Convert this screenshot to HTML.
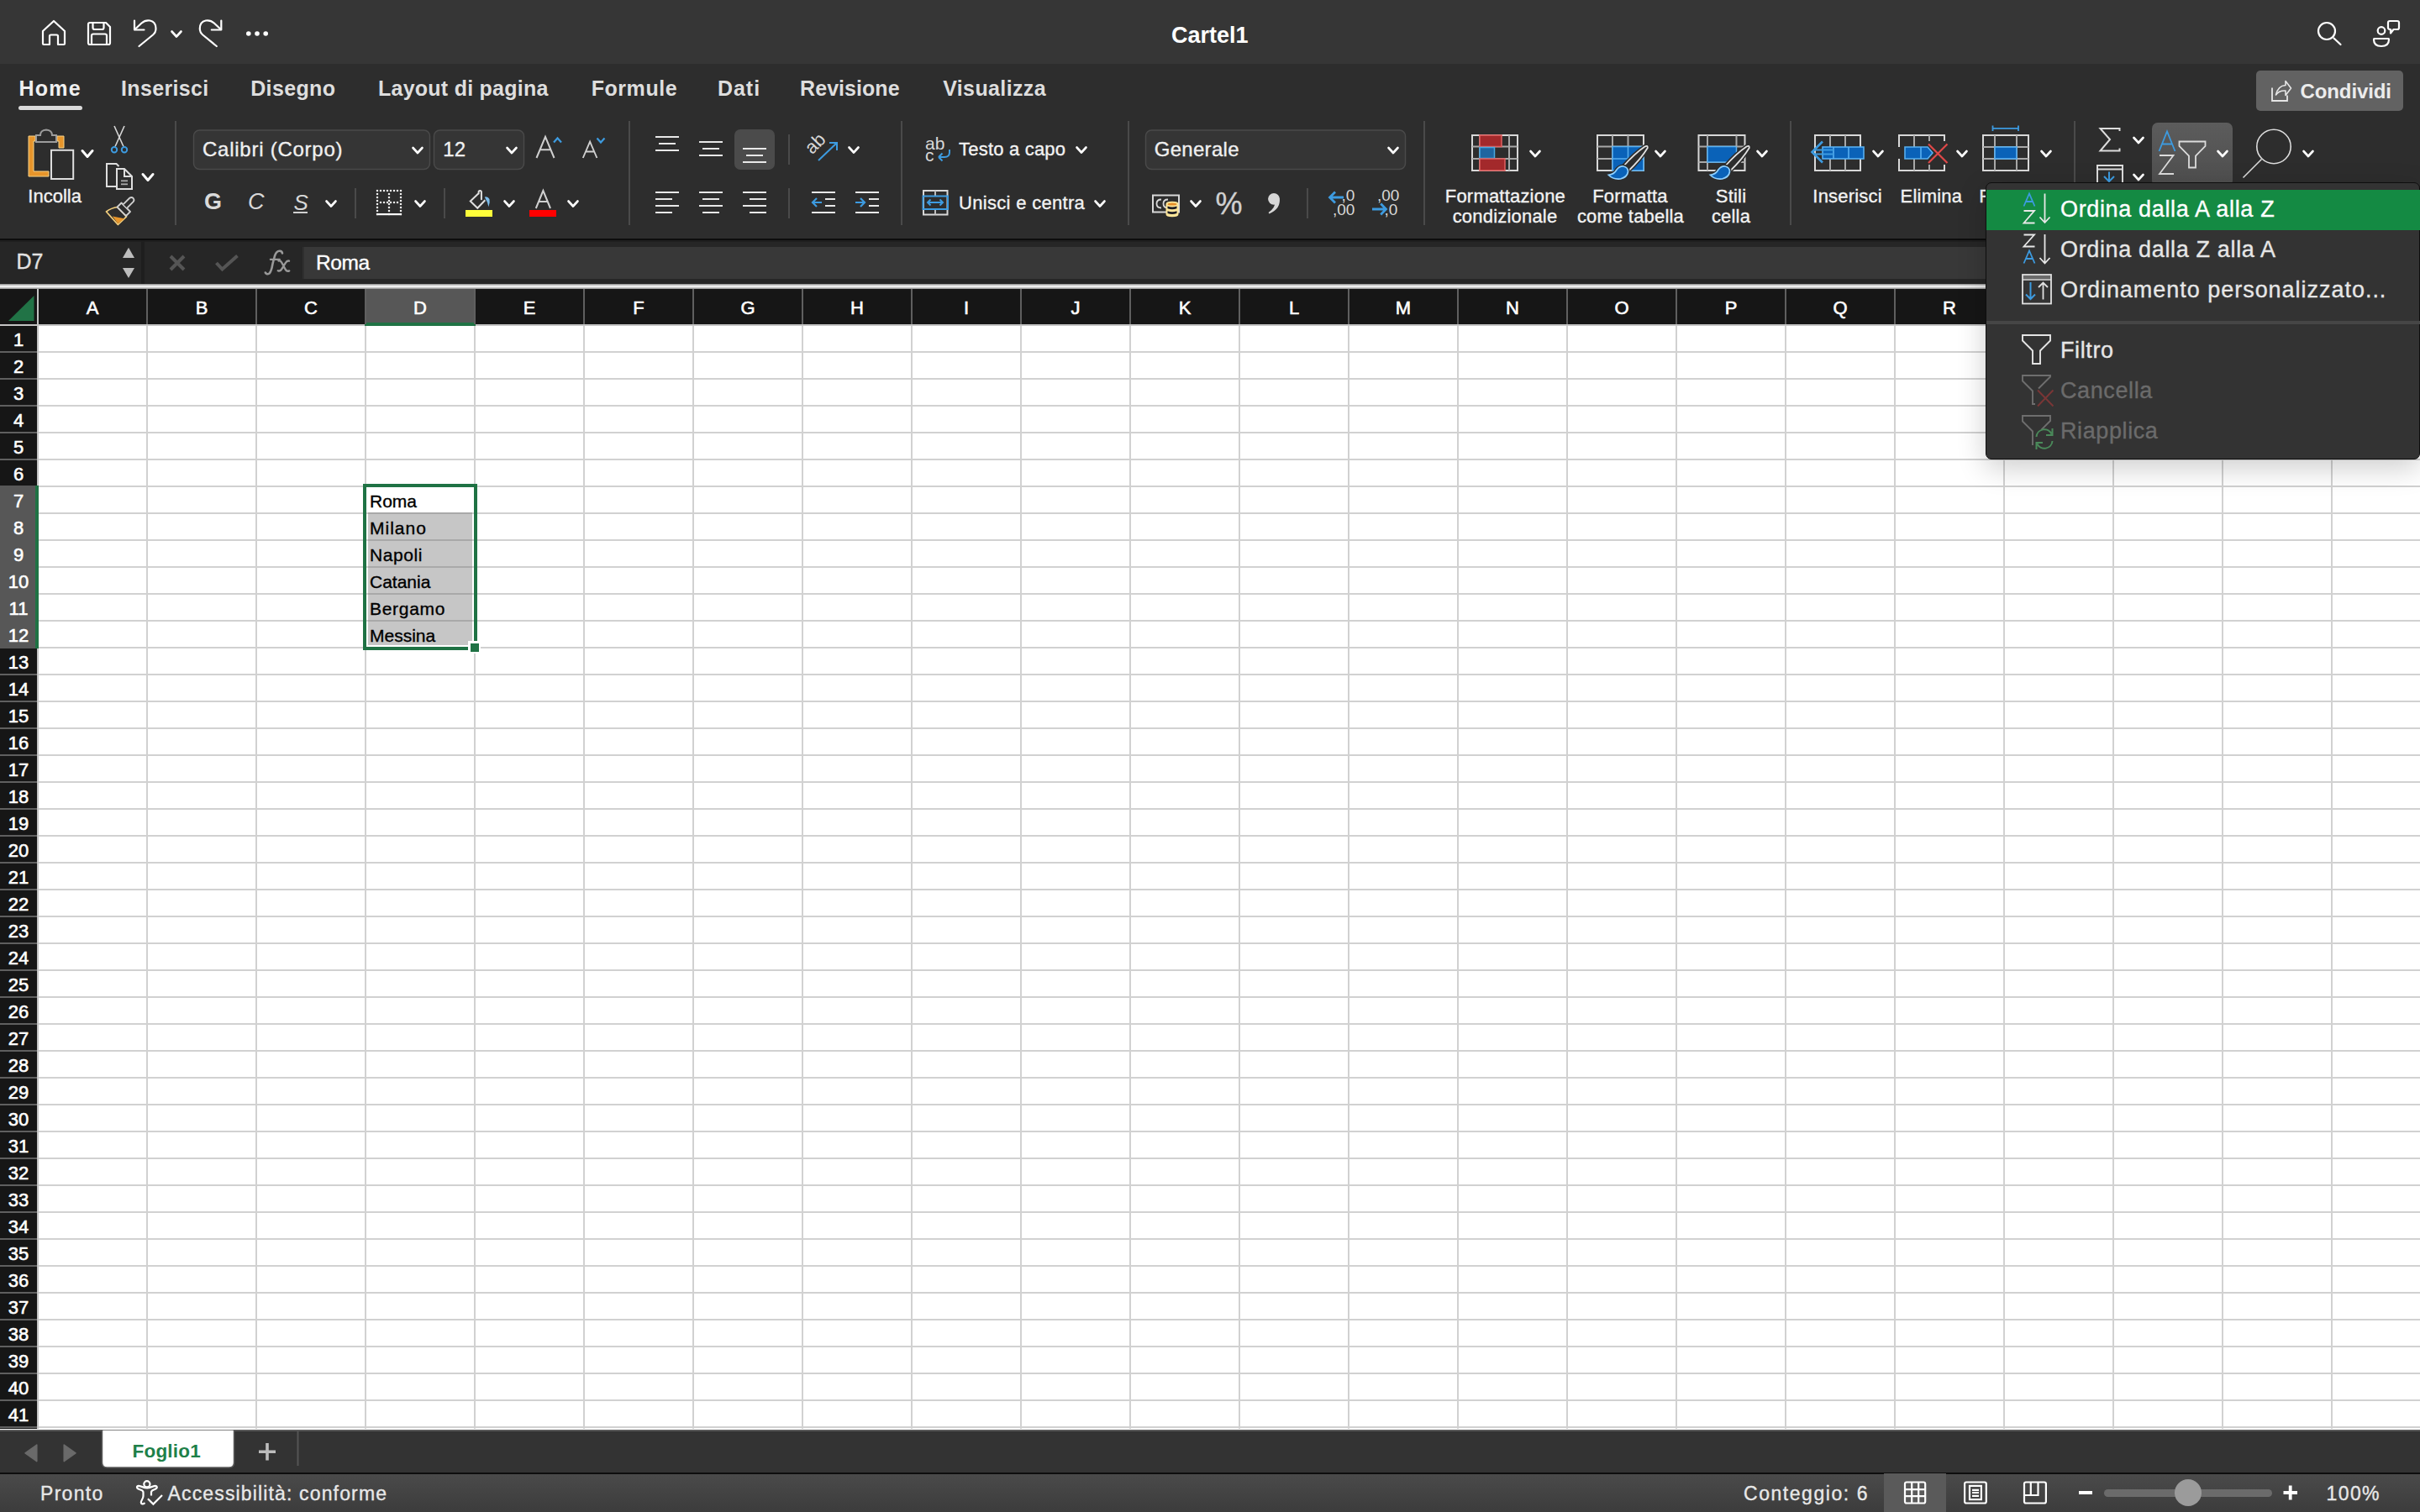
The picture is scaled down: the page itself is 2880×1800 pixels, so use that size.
<!DOCTYPE html>
<html><head><meta charset="utf-8">
<style>
*{margin:0;padding:0;box-sizing:border-box}
html,body{width:2880px;height:1800px;overflow:hidden;background:#fff;font-family:"Liberation Sans",sans-serif}
.a{position:absolute}
#title{left:0;top:0;width:2880px;height:76px;background:#363636}
#ribbon{left:0;top:76px;width:2880px;height:208px;background:#2d2d2d}
#rline{left:0;top:284px;width:2880px;height:2px;background:#0d0d0d}
#fbar{left:0;top:286px;width:2880px;height:52px;background:#262626}
#hline{left:0;top:338px;width:2880px;height:6px;background:linear-gradient(#8a8a8a,#f6f6f6 45%,#f6f6f6 55%,#8a8a8a)}
#colhdr{left:0;top:344px;width:2880px;height:42px;background:#161616}
#hdrb{left:0;top:386px;width:2880px;height:2px;background:#c4c4c4}
#grid{left:46px;top:388px;width:2834px;height:1313px;background-color:#fff;
 background-image:linear-gradient(to right, transparent 128px, #d1d1d1 128px, #d1d1d1 130px),linear-gradient(to bottom, transparent 30px, #d1d1d1 30px, #d1d1d1 32px);
 background-size:130px 32px,130px 32px}
#rowhdr{left:0;top:388px;width:44px;height:1313px;background:#161616;
 background-image:linear-gradient(to bottom, transparent 30px, #5f5f5f 30px, #5f5f5f 32px);background-size:44px 32px}
#rowhdrb{left:44px;top:344px;width:2px;height:1357px;background:#c4c4c4}
.ch{position:absolute;top:344px;width:128px;height:42px;line-height:45px;text-align:center;color:#fff;font-size:22px;-webkit-text-stroke:0.6px #fff}
.ch::after{content:"";position:absolute;right:-2px;top:0;width:2px;height:42px;background:#5f5f5f}
.rh{position:absolute;left:0;width:44px;height:30px;line-height:33px;text-align:center;color:#fff;font-size:22px;-webkit-text-stroke:0.6px #fff}
#tabbar{left:0;top:1702px;width:2880px;height:52px;background:#333}
#sline{left:0;top:1753px;width:2880px;height:2px;background:#0e0e0e}
#status{left:0;top:1755px;width:2880px;height:45px;background:linear-gradient(#4a4a4a,#3c3c3c)}
.t{position:absolute;white-space:nowrap;color:#e6e6e6;-webkit-text-stroke:0.35px currentColor}
.nb{-webkit-text-stroke:0}
</style></head><body>
<div class="a" id="title"></div>
<svg class="a" style="left:0;top:0" width="2880" height="76" fill="none" stroke="#fff" stroke-width="2.2" stroke-linejoin="round" stroke-linecap="round">
<path d="M51,52 L51,37 L64,25 L77,37 L77,52 Q77,53 76,53 L69,53 L69,43 Q69,41.5 67.5,41.5 L60.5,41.5 Q59,41.5 59,43 L59,53 L52,53 Q51,53 51,52 Z"/>
<path d="M105,29 Q105,27 107,27 L126,27 L131,32 L131,51 Q131,53 129,53 L107,53 Q105,53 105,51 Z"/>
<path d="M110.5,27 L110.5,33 Q110.5,35 112.5,35 L121.5,35 Q123.5,35 123.5,33 L123.5,27"/>
<path d="M109,53 L109,42.5 Q109,40.5 111,40.5 L125,40.5 Q127,40.5 127,42.5 L127,53"/>
<path d="M160,24.5 L160,35.5 L171.5,35.5"/>
<path d="M160.5,35 L168.5,27.5 Q173,23.5 178.5,24.5 Q185.5,26 185.5,34 Q185.5,38.5 182,41.5 L165.5,55"/>
<path d="M204.5,37.5 L210,43.5 L215.5,37.5" stroke-width="2.6"/>
<path d="M263.3,24.5 L263.3,35.5 L251.8,35.5"/>
<path d="M262.8,35 L254.8,27.5 Q250.3,23.5 244.8,24.5 Q237.8,26 237.8,34 Q237.8,38.5 241.3,41.5 L257.8,55"/>
<circle cx="2769" cy="37" r="10"/>
<path d="M2777.5,45.5 L2785.5,53"/>
<circle cx="2834" cy="36.5" r="4.3"/>
<path d="M2825.5,46 L2842.5,46 Q2843,46 2843,47 Q2843,55 2834,55 Q2825,55 2825,47 Q2825,46 2825.5,46 Z"/>
<path d="M2844,25 L2853,25 Q2855,25 2855,27 L2855,33 Q2855,35 2853,35 L2848.5,35 L2845,39.5 L2845,35 Q2842,35 2842,33 L2842,27 Q2842,25 2844,25 Z"/>
</svg>
<svg class="a" style="left:0;top:0" width="400" height="76" fill="#fff"><circle cx="295.8" cy="40" r="2.8"/><circle cx="306" cy="40" r="2.8"/><circle cx="316.2" cy="40" r="2.8"/></svg>
<div class="t nb" style="left:1394px;top:27px;font-size:27px;font-weight:bold;color:#fff;line-height:30px">Cartel1</div>

<div class="a" id="ribbon"></div>
<!--RIBBON-->
<svg class="a" style="left:0;top:0" width="2880" height="290"><defs><linearGradient id="sfg" x1="0" y1="0" x2="0" y2="1"><stop offset="0" stop-color="#5c5c5c"/><stop offset="1" stop-color="#4e4e4e"/></linearGradient></defs><path d="M34,162 L42,162 L42,168 L40,168 L40,204 L58,204 L58,210 L34,210 Z" fill="#e6952b" stroke="#f6d38a" stroke-width="1"/><path d="M68,162 L76,162 L76,176 L70,176 L70,168 L68,168 Z" fill="#e6952b" stroke="#f6d38a" stroke-width="1"/><path d="M43,169 L43,161 L48,161 Q48,155 55,154.5 Q62,155 62,161 L67,161 L67,169 Z" fill="none" stroke="#9c9c9c" stroke-width="2"/><rect x="61" y="178.8" width="26.2" height="34.2" fill="#2d2d2d" stroke="#dedede" stroke-width="2"/><path d="M98.0,179.5 L104,186.5 L110.0,179.5" stroke="#fff" stroke-width="3" fill="none" stroke-linecap="round" stroke-linejoin="round"/><path d="M136,150 L147,174.5" stroke="#d8d8d8" stroke-width="1.6" fill="none"/><path d="M148,150 L137,174.5" stroke="#d8d8d8" stroke-width="1.6" fill="none"/><circle cx="136" cy="178.3" r="3.2" fill="none" stroke="#3d9be0" stroke-width="2"/><circle cx="148" cy="178.3" r="3.2" fill="none" stroke="#3d9be0" stroke-width="2"/><path d="M139,222 L127,222 L127,195 L138.5,195 L141.5,198" fill="none" stroke="#dedede" stroke-width="2"/><path d="M139,201 L148,201 L157,210 L157,225 L139,225 Z" fill="none" stroke="#dedede" stroke-width="2"/><path d="M148,201 L148,210 L157,210" fill="none" stroke="#dedede" stroke-width="2"/><path d="M144,215.3 L152,215.3" stroke="#aaa" stroke-width="1.8" fill="none"/><path d="M144,219.3 L152,219.3" stroke="#aaa" stroke-width="1.8" fill="none"/><path d="M170.0,207.5 L176,214.5 L182.0,207.5" stroke="#fff" stroke-width="3" fill="none" stroke-linecap="round" stroke-linejoin="round"/><path d="M126.5,252 Q132.5,247.5 139.5,246.5 L150.5,257.8 L140.4,267.5 Z" fill="#2d2d2d" stroke="#f3cf7e" stroke-width="1.7" stroke-linejoin="round"/><path d="M133.8,257.5 L148.2,260.2 L140.4,266.2 Z" fill="#e6952b"/><path d="M139.5,246.5 L144.5,241.5 L155,252 L150,257 Z" fill="#2d2d2d" stroke="#d0d0d0" stroke-width="1.8" stroke-linejoin="round"/><path d="M146.8,243.2 L154.2,235.8 Q156.6,234 158.6,236 Q160.4,238.2 158.6,240.2 L151.2,247.6" fill="#2d2d2d" stroke="#d0d0d0" stroke-width="1.8"/><rect x="208" y="144" width="2" height="124" fill="#4a4a4a"/><rect x="230.5" y="155" width="281" height="46.5" rx="7" fill="#353535" stroke="#4a4a4a" stroke-width="1.5"/><rect x="516.5" y="155" width="107" height="46.5" rx="7" fill="#353535" stroke="#4a4a4a" stroke-width="1.5"/><path d="M491.5,176.0 L497,182.0 L502.5,176.0" stroke="#fff" stroke-width="2.6" fill="none" stroke-linecap="round" stroke-linejoin="round"/><path d="M603.5,176.0 L609,182.0 L614.5,176.0" stroke="#fff" stroke-width="2.6" fill="none" stroke-linecap="round" stroke-linejoin="round"/><path d="M659,169.5 L663.5,164.5 L668,169.5" stroke="#3d9be0" stroke-width="2.2" fill="none"/><path d="M710.5,164.5 L715,169.5 L719.5,164.5" stroke="#3d9be0" stroke-width="2.2" fill="none"/><path d="M388.5,239.5 L394,245.5 L399.5,239.5" stroke="#fff" stroke-width="2.6" fill="none" stroke-linecap="round" stroke-linejoin="round"/><rect x="422" y="224" width="2" height="36" fill="#4a4a4a"/><g fill="#f0f0f0"><rect x="447.9" y="225.9" width="2.2" height="2.2"/><rect x="451.9" y="225.9" width="2.2" height="2.2"/><rect x="455.9" y="225.9" width="2.2" height="2.2"/><rect x="459.9" y="225.9" width="2.2" height="2.2"/><rect x="463.9" y="225.9" width="2.2" height="2.2"/><rect x="467.9" y="225.9" width="2.2" height="2.2"/><rect x="471.9" y="225.9" width="2.2" height="2.2"/><rect x="475.9" y="225.9" width="2.2" height="2.2"/><rect x="447.9" y="229.9" width="2.2" height="2.2"/><rect x="475.9" y="229.9" width="2.2" height="2.2"/><rect x="461.9" y="229.9" width="2.2" height="2.2"/><rect x="447.9" y="233.9" width="2.2" height="2.2"/><rect x="475.9" y="233.9" width="2.2" height="2.2"/><rect x="461.9" y="233.9" width="2.2" height="2.2"/><rect x="447.9" y="237.9" width="2.2" height="2.2"/><rect x="475.9" y="237.9" width="2.2" height="2.2"/><rect x="461.9" y="237.9" width="2.2" height="2.2"/><rect x="447.9" y="241.9" width="2.2" height="2.2"/><rect x="475.9" y="241.9" width="2.2" height="2.2"/><rect x="461.9" y="241.9" width="2.2" height="2.2"/><rect x="447.9" y="245.9" width="2.2" height="2.2"/><rect x="475.9" y="245.9" width="2.2" height="2.2"/><rect x="461.9" y="245.9" width="2.2" height="2.2"/><rect x="447.9" y="249.9" width="2.2" height="2.2"/><rect x="475.9" y="249.9" width="2.2" height="2.2"/><rect x="461.9" y="249.9" width="2.2" height="2.2"/><rect x="447.9" y="253.9" width="2.2" height="2.2"/><rect x="475.9" y="253.9" width="2.2" height="2.2"/><rect x="461.9" y="253.9" width="2.2" height="2.2"/><rect x="451.9" y="239.9" width="2.2" height="2.2"/><rect x="455.9" y="239.9" width="2.2" height="2.2"/><rect x="459.9" y="239.9" width="2.2" height="2.2"/><rect x="463.9" y="239.9" width="2.2" height="2.2"/><rect x="467.9" y="239.9" width="2.2" height="2.2"/><rect x="471.9" y="239.9" width="2.2" height="2.2"/></g><rect x="448" y="254" width="30" height="2.2" fill="#fff"/><path d="M494.5,239.5 L500,245.5 L505.5,239.5" stroke="#fff" stroke-width="2.6" fill="none" stroke-linecap="round" stroke-linejoin="round"/><rect x="528" y="224" width="2" height="36" fill="#4a4a4a"/><path d="M569.2,230.6 L559.8,239.5 L568.3,247.8 L577.3,238.2" fill="none" stroke="#e0e0e0" stroke-width="2" stroke-linejoin="miter"/><path d="M569.6,230.5 L569.6,228.8 Q569.6,227 571.2,227 Q572.9,227 572.9,228.8 L572.9,237.3" fill="none" stroke="#e0e0e0" stroke-width="2" stroke-linecap="round"/><path d="M576.8,234.6 Q580.5,233.5 582.5,237 Q583.5,241 581.4,246.3 Q580.5,240.5 578.2,237.5 Z" fill="#7cbdec"/><path d="M638.5,188 L649,162.8 L659.5,188 M642.6,178.2 L655.4,178.2" fill="none" stroke="#d0d0d0" stroke-width="2"/><path d="M693.8,188 L702.1,168.6 L710.4,188 M697,180.5 L707.2,180.5" fill="none" stroke="#d0d0d0" stroke-width="1.9"/><path d="M637.8,248 L646.4,227 L655,248 M641.2,240 L651.6,240" fill="none" stroke="#d0d0d0" stroke-width="2"/><rect x="554" y="250" width="32" height="8" fill="#fdfd3a"/><path d="M600.5,239.5 L606,245.5 L611.5,239.5" stroke="#fff" stroke-width="2.6" fill="none" stroke-linecap="round" stroke-linejoin="round"/><rect x="630" y="250" width="32" height="8" fill="#f00"/><path d="M676.5,239.5 L682,245.5 L687.5,239.5" stroke="#fff" stroke-width="2.6" fill="none" stroke-linecap="round" stroke-linejoin="round"/><rect x="748" y="144" width="2" height="124" fill="#4a4a4a"/><rect x="780" y="162" width="28" height="2" fill="#e8e8e8"/><rect x="784" y="170" width="20" height="2" fill="#e8e8e8"/><rect x="780" y="178" width="28" height="2" fill="#e8e8e8"/><rect x="832" y="168" width="28" height="2" fill="#e8e8e8"/><rect x="836" y="176" width="20" height="2" fill="#e8e8e8"/><rect x="832" y="184" width="28" height="2" fill="#e8e8e8"/><rect x="874" y="154" width="48" height="48" rx="7" fill="#4b4b4b"/><rect x="884" y="176" width="28" height="2" fill="#e8e8e8"/><rect x="888" y="184" width="20" height="2" fill="#e8e8e8"/><rect x="884" y="192" width="28" height="2" fill="#e8e8e8"/><rect x="938" y="160" width="2" height="36" fill="#4a4a4a"/><path d="M974,191 L996,170" stroke="#3d9be0" stroke-width="2" fill="none"/><path d="M987,170 L996,170 L996,179" stroke="#3d9be0" stroke-width="2" fill="none"/><path d="M1010.5,175.5 L1016,181.5 L1021.5,175.5" stroke="#fff" stroke-width="2.6" fill="none" stroke-linecap="round" stroke-linejoin="round"/><rect x="780" y="228" width="28" height="2" fill="#e8e8e8"/><rect x="780" y="236" width="20" height="2" fill="#e8e8e8"/><rect x="780" y="244" width="28" height="2" fill="#e8e8e8"/><rect x="780" y="252" width="20" height="2" fill="#e8e8e8"/><rect x="832" y="228" width="28" height="2" fill="#e8e8e8"/><rect x="836" y="236" width="20" height="2" fill="#e8e8e8"/><rect x="832" y="244" width="28" height="2" fill="#e8e8e8"/><rect x="836" y="252" width="20" height="2" fill="#e8e8e8"/><rect x="884" y="228" width="28" height="2" fill="#e8e8e8"/><rect x="892" y="236" width="20" height="2" fill="#e8e8e8"/><rect x="884" y="244" width="28" height="2" fill="#e8e8e8"/><rect x="892" y="252" width="20" height="2" fill="#e8e8e8"/><rect x="938" y="224" width="2" height="36" fill="#4a4a4a"/><rect x="966" y="228" width="28" height="2" fill="#e8e8e8"/><rect x="982" y="236" width="12" height="2" fill="#e8e8e8"/><rect x="982" y="244" width="12" height="2" fill="#e8e8e8"/><rect x="966" y="252" width="28" height="2" fill="#e8e8e8"/><path d="M978,241 L967,241 M972,236 L967,241 L972,246" stroke="#3d9be0" stroke-width="2.2" fill="none"/><rect x="1018" y="228" width="28" height="2" fill="#e8e8e8"/><rect x="1034" y="236" width="12" height="2" fill="#e8e8e8"/><rect x="1034" y="244" width="12" height="2" fill="#e8e8e8"/><rect x="1018" y="252" width="28" height="2" fill="#e8e8e8"/><path d="M1018,241 L1029,241 M1024,236 L1029,241 L1024,246" stroke="#3d9be0" stroke-width="2.2" fill="none"/><rect x="1072" y="144" width="2" height="124" fill="#4a4a4a"/><path d="M1117,187 L1121.5,182.5 M1117,187 L1121.5,191.5 M1117,187 L1124,187 Q1130,187 1130,181.5 L1130,178" stroke="#3d9be0" stroke-width="2" fill="none"/><path d="M1281.5,175.5 L1287,181.5 L1292.5,175.5" stroke="#fff" stroke-width="2.6" fill="none" stroke-linecap="round" stroke-linejoin="round"/><rect x="1099" y="227" width="28.5" height="28.5" fill="none" stroke="#d8d8d8" stroke-width="2"/><path d="M1113,227 L1113,233 M1113,249 L1113,255.5" stroke="#bcbcbc" stroke-width="2"/><rect x="1098.5" y="233.5" width="29.5" height="15.5" fill="none" stroke="#3d9be0" stroke-width="2"/><path d="M1104,241 L1122,241 M1107.5,237.5 L1104,241 L1107.5,244.5 M1118.5,237.5 L1122,241 L1118.5,244.5" stroke="#3d9be0" stroke-width="2" fill="none"/><path d="M1303.5,239.5 L1309,245.5 L1314.5,239.5" stroke="#fff" stroke-width="2.6" fill="none" stroke-linecap="round" stroke-linejoin="round"/><rect x="1342" y="144" width="2" height="124" fill="#4a4a4a"/><rect x="1363.5" y="155" width="309" height="46.5" rx="7" fill="#353535" stroke="#4a4a4a" stroke-width="1.5"/><path d="M1652.5,176.0 L1658,182.0 L1663.5,176.0" stroke="#fff" stroke-width="2.6" fill="none" stroke-linecap="round" stroke-linejoin="round"/><rect x="1372" y="232.5" width="31" height="20" fill="none" stroke="#d8d8d8" stroke-width="2"/><path d="M1382,237.5 Q1376.5,237.5 1376.5,242.5 Q1376.5,247.5 1382,247.5 M1390,237.5 Q1384.5,237.5 1384.5,242.5 Q1384.5,247.5 1390,247.5" stroke="#d8d8d8" stroke-width="1.8" fill="none"/><path d="M1387.5,243 Q1387.5,239.8 1395,239.8 Q1402.5,239.8 1402.5,243 L1402.5,255 Q1402.5,258.2 1395,258.2 Q1387.5,258.2 1387.5,255 Z" fill="#fde69a"/><ellipse cx="1395" cy="243" rx="5.5" ry="1.6" fill="#e58e2a"/><path d="M1389.5,245.6 Q1395,247.6 1400.5,245.6 L1400.5,248.2 Q1395,250.4 1389.5,248.2 Z M1389.5,251.2 Q1395,253.2 1400.5,251.2 L1400.5,254 Q1395,256.2 1389.5,254 Z" fill="#1c1c24"/><path d="M1417.5,239.5 L1423,245.5 L1428.5,239.5" stroke="#fff" stroke-width="2.6" fill="none" stroke-linecap="round" stroke-linejoin="round"/><rect x="1555" y="224" width="2" height="36" fill="#4a4a4a"/><path d="M1599,235 L1582.5,235 M1589,228.6 L1582.5,235 L1589,241.4" stroke="#3d9be0" stroke-width="2.8" fill="none"/><path d="M1633,249 L1649.5,249 M1643.2,242.6 L1649.5,249 L1643.2,255.4" stroke="#3d9be0" stroke-width="2.8" fill="none"/><circle cx="1516" cy="236.8" r="6.9" fill="#d6d6d6"/><path d="M1522.5,235.5 Q1525,248 1510.5,254.5 L1509.6,253 Q1518,247 1517,241 Z" fill="#d6d6d6"/><rect x="1694" y="144" width="2" height="124" fill="#4a4a4a"/><rect x="1752" y="161" width="54" height="42" fill="none" stroke="#d8d8d8" stroke-width="2"/><path d="M1761,161 L1761,203" stroke="#a8a8a8" stroke-width="2"/><path d="M1796,161 L1796,203" stroke="#a8a8a8" stroke-width="2"/><path d="M1752,174.5 L1806,174.5" stroke="#a8a8a8" stroke-width="2"/><path d="M1752,189 L1806,189" stroke="#a8a8a8" stroke-width="2"/><rect x="1761" y="161" width="26" height="13.5" fill="#a3292b" stroke="#e06060" stroke-width="1.5"/><rect x="1761" y="175.5" width="17.5" height="13" fill="#1f65a0" stroke="#4aa8e0" stroke-width="1.5"/><rect x="1761" y="189" width="30" height="14" fill="#a3292b" stroke="#e06060" stroke-width="1.5"/><path d="M1821.5,180.0 L1827,186.0 L1832.5,180.0" stroke="#fff" stroke-width="2.6" fill="none" stroke-linecap="round" stroke-linejoin="round"/><rect x="1901" y="161" width="55" height="42" fill="none" stroke="#d8d8d8" stroke-width="2"/><path d="M1919,161 L1919,203" stroke="#a8a8a8" stroke-width="2"/><path d="M1937.5,161 L1937.5,203" stroke="#a8a8a8" stroke-width="2"/><path d="M1901,174.5 L1956,174.5" stroke="#a8a8a8" stroke-width="2"/><path d="M1901,189 L1956,189" stroke="#a8a8a8" stroke-width="2"/><rect x="1919" y="174.5" width="37" height="28.5" fill="#0a62b8" stroke="#58b0f0" stroke-width="1.5"/><path d="M1937.5,174.5 L1937.5,203 M1919,189 L1956,189" stroke="#58b0f0" stroke-width="1.5"/><path d="M1932.0,198 Q1945.0,183 1957.5,174.5 Q1961.0,172.5 1960.8,176 Q1953.0,189 1938.0,203.5 Z" fill="#2d2d2d" stroke="#2d2d2d" stroke-width="5"/><path d="M1932.0,198 Q1945.0,183 1957.5,174.5 Q1961.0,172.5 1960.8,176 Q1953.0,189 1938.0,203.5 Z" fill="#2d2d2d" stroke="#e0e0e0" stroke-width="1.8"/><path d="M1914.3,208.3 Q1921.0,207.5 1924.0,202 Q1927.5,197.5 1932.0,198 Q1937.5,199 1937.5,204.5 Q1936.5,211 1928.5,213 Q1919.5,214 1914.3,208.3 Z" fill="#2d2d2d" stroke="#2d2d2d" stroke-width="4.5"/><path d="M1914.3,208.3 Q1921.0,207.5 1924.0,202 Q1927.5,197.5 1932.0,198 Q1937.5,199 1937.5,204.5 Q1936.5,211 1928.5,213 Q1919.5,214 1914.3,208.3 Z" fill="#0a62b8" stroke="#8fd0ff" stroke-width="1.7"/><path d="M1970.5,180.0 L1976,186.0 L1981.5,180.0" stroke="#fff" stroke-width="2.6" fill="none" stroke-linecap="round" stroke-linejoin="round"/><rect x="2021.5" y="161" width="55.0" height="42" fill="none" stroke="#d8d8d8" stroke-width="2"/><path d="M2032,161 L2032,203" stroke="#a8a8a8" stroke-width="2"/><path d="M2021.5,174.5 L2076.5,174.5" stroke="#a8a8a8" stroke-width="2"/><path d="M2021.5,193 L2076.5,193" stroke="#a8a8a8" stroke-width="2"/><rect x="2032" y="174.5" width="34.5" height="18.5" fill="#0a62b8" stroke="#58b0f0" stroke-width="1.5"/><path d="M2066.5,161 L2066.5,174.5" stroke="#a8a8a8" stroke-width="2"/><path d="M2053.0,198 Q2066.0,183 2078.5,174.5 Q2082.0,172.5 2081.8,176 Q2074.0,189 2059.0,203.5 Z" fill="#2d2d2d" stroke="#2d2d2d" stroke-width="5"/><path d="M2053.0,198 Q2066.0,183 2078.5,174.5 Q2082.0,172.5 2081.8,176 Q2074.0,189 2059.0,203.5 Z" fill="#2d2d2d" stroke="#e0e0e0" stroke-width="1.8"/><path d="M2035.3,208.3 Q2042.0,207.5 2045.0,202 Q2048.5,197.5 2053.0,198 Q2058.5,199 2058.5,204.5 Q2057.5,211 2049.5,213 Q2040.5,214 2035.3,208.3 Z" fill="#2d2d2d" stroke="#2d2d2d" stroke-width="4.5"/><path d="M2035.3,208.3 Q2042.0,207.5 2045.0,202 Q2048.5,197.5 2053.0,198 Q2058.5,199 2058.5,204.5 Q2057.5,211 2049.5,213 Q2040.5,214 2035.3,208.3 Z" fill="#0a62b8" stroke="#8fd0ff" stroke-width="1.7"/><path d="M2091.5,180.0 L2097,186.0 L2102.5,180.0" stroke="#fff" stroke-width="2.6" fill="none" stroke-linecap="round" stroke-linejoin="round"/><rect x="2130" y="144" width="2" height="124" fill="#4a4a4a"/><rect x="2160" y="161" width="54" height="42" fill="none" stroke="#d8d8d8" stroke-width="2"/><path d="M2178,161 L2178,203" stroke="#a8a8a8" stroke-width="2"/><path d="M2196,161 L2196,203" stroke="#a8a8a8" stroke-width="2"/><rect x="2169" y="175" width="49" height="14" fill="#0a62b8" stroke="#58b0f0" stroke-width="1.6"/><path d="M2182,175 L2182,189 M2200,175 L2200,189" stroke="#58b0f0" stroke-width="1.6"/><path d="M2169,168.5 L2156.5,181 L2169,193.5" stroke="#3d9be0" stroke-width="2.6" fill="none"/><path d="M2158,178.6 L2182,178.6 M2158,183.4 L2182,183.4" stroke="#3d9be0" stroke-width="2" fill="none"/><path d="M2229.5,180.0 L2235,186.0 L2240.5,180.0" stroke="#fff" stroke-width="2.6" fill="none" stroke-linecap="round" stroke-linejoin="round"/><path d="M2260,175 L2260,161 L2314,161 L2314,168 M2314,196 L2314,203 L2260,203 L2260,189" stroke="#d8d8d8" stroke-width="2" fill="none"/><path d="M2278,161 L2278,175 M2296,161 L2296,168 M2278,189 L2278,203 M2296,196 L2296,203" stroke="#a8a8a8" stroke-width="2"/><path d="M2267,175 L2294,175 L2300,182 L2294,189 L2267,189 Z" fill="#0a62b8" stroke="#58b0f0" stroke-width="1.6"/><path d="M2286,175 L2286,189" stroke="#58b0f0" stroke-width="1.6"/><path d="M2295,171.5 L2317.5,194 M2317.5,171.5 L2295,194" stroke="#e04848" stroke-width="2.2"/><path d="M2329.5,180.0 L2335,186.0 L2340.5,180.0" stroke="#fff" stroke-width="2.6" fill="none" stroke-linecap="round" stroke-linejoin="round"/><rect x="2360" y="161" width="54" height="42" fill="none" stroke="#d8d8d8" stroke-width="2"/><path d="M2374,161 L2374,203" stroke="#a8a8a8" stroke-width="2"/><path d="M2400,161 L2400,203" stroke="#a8a8a8" stroke-width="2"/><path d="M2360,175 L2414,175" stroke="#a8a8a8" stroke-width="2"/><path d="M2360,189 L2414,189" stroke="#a8a8a8" stroke-width="2"/><rect x="2374" y="175" width="26" height="14" fill="#0a62b8" stroke="#58b0f0" stroke-width="1.6"/><path d="M2371.5,149.5 L2371.5,156 M2402,149.5 L2402,156 M2371.5,152.8 L2402,152.8" stroke="#3d9be0" stroke-width="1.8"/><path d="M2429.5,180.0 L2435,186.0 L2440.5,180.0" stroke="#fff" stroke-width="2.6" fill="none" stroke-linecap="round" stroke-linejoin="round"/><rect x="2468" y="144" width="2" height="124" fill="#4a4a4a"/><path d="M2522.5,156 L2522.5,153 L2499.5,153 L2511,166 L2499.5,179.5 L2522.5,179.5 L2522.5,176.5" stroke="#dcdcdc" stroke-width="2" fill="none"/><path d="M2539.5,164.0 L2545,170.0 L2550.5,164.0" stroke="#fff" stroke-width="2.6" fill="none" stroke-linecap="round" stroke-linejoin="round"/><path d="M2496,218 L2496,197 L2526,197 L2526,218 M2496,201.5 L2526,201.5" stroke="#dcdcdc" stroke-width="2" fill="none"/><path d="M2510,204.5 L2510,216 M2504,210 L2510,216 L2516,210" stroke="#3d9be0" stroke-width="2" fill="none"/><path d="M2539.5,208.0 L2545,214.0 L2550.5,208.0" stroke="#fff" stroke-width="2.6" fill="none" stroke-linecap="round" stroke-linejoin="round"/><rect x="2561" y="146" width="96" height="76" rx="7" fill="url(#sfg)"/><path d="M2593.5,168.5 L2624.5,168.5 L2624.5,174 L2613,185.5 L2613,199.5 L2605,199.5 L2605,185.5 L2593.5,174 Z" stroke="#dcdcdc" stroke-width="1.8" fill="none"/><path d="M2569.5,180 L2579,156.5 L2588.5,180 M2573,171.5 L2585,171.5" stroke="#3d9be0" stroke-width="1.8" fill="none"/><path d="M2570,185 L2586.5,185 L2570,207 L2587,207" stroke="#dcdcdc" stroke-width="1.8" fill="none"/><path d="M2639.5,180.0 L2645,186.0 L2650.5,180.0" stroke="#fff" stroke-width="2.6" fill="none" stroke-linecap="round" stroke-linejoin="round"/><circle cx="2706" cy="174.5" r="20.2" stroke="#dcdcdc" stroke-width="1.6" fill="none"/><path d="M2691.5,189.5 L2669.5,211.5" stroke="#dcdcdc" stroke-width="1.6"/><path d="M2741.5,180.0 L2747,186.0 L2752.5,180.0" stroke="#fff" stroke-width="2.6" fill="none" stroke-linecap="round" stroke-linejoin="round"/><rect x="2685" y="84" width="175" height="48" rx="5" fill="#626262"/><path d="M2704,104.5 L2704,120 L2722,120 L2722,113.5" stroke="#e6e6e6" stroke-width="1.8" fill="none"/><path d="M2708.5,113 Q2711,102 2720,101.5 L2720,96.5 L2726.5,105 L2720,113.5 L2720,108 Q2712,107.5 2708.5,113 Z" stroke="#e6e6e6" stroke-width="1.6" fill="none" stroke-linejoin="round"/></svg>
<div class="t nb" style="left:22.4px;top:92.5px;font-size:25px;line-height:25px;color:#f0f0f0;font-weight:bold;letter-spacing:1.3px">Home</div>
<div class="t nb" style="left:144.1px;top:92.5px;font-size:25px;line-height:25px;color:#dedede;font-weight:bold;letter-spacing:0.33px">Inserisci</div>
<div class="t nb" style="left:298.2px;top:92.5px;font-size:25px;line-height:25px;color:#dedede;font-weight:bold;letter-spacing:0.35px">Disegno</div>
<div class="t nb" style="left:450.0px;top:92.5px;font-size:25px;line-height:25px;color:#dedede;font-weight:bold;letter-spacing:0.25px">Layout di pagina</div>
<div class="t nb" style="left:703.7px;top:92.5px;font-size:25px;line-height:25px;color:#dedede;font-weight:bold;letter-spacing:0.55px">Formule</div>
<div class="t nb" style="left:853.9px;top:92.5px;font-size:25px;line-height:25px;color:#dedede;font-weight:bold;letter-spacing:1.0px">Dati</div>
<div class="t nb" style="left:952.1px;top:92.5px;font-size:25px;line-height:25px;color:#dedede;font-weight:bold;letter-spacing:0.05px">Revisione</div>
<div class="t nb" style="left:1122.2px;top:92.5px;font-size:25px;line-height:25px;color:#dedede;font-weight:bold;letter-spacing:0.38px">Visualizza</div>
<div class="a" style="left:22px;top:126px;width:76px;height:5px;border-radius:3px;background:#d9d9d9"></div>
<div class="t" style="left:33.3px;top:223.3px;font-size:22px;line-height:22px;color:#f2f2f2">Incolla</div>
<div class="t" style="left:241.0px;top:165.7px;font-size:24px;line-height:24px;color:#f0f0f0;letter-spacing:0.75px">Calibri (Corpo)</div>
<div class="t" style="left:527.3px;top:165.7px;font-size:24px;line-height:24px;color:#f0f0f0">12</div>
<div class="t" style="left:1141.1px;top:167.3px;font-size:22px;line-height:22px;color:#f2f2f2;letter-spacing:0.2px">Testo a capo</div>
<div class="t" style="left:1141.1px;top:231.2px;font-size:22px;line-height:22px;color:#f2f2f2;letter-spacing:0.3px">Unisci e centra</div>
<div class="t" style="left:1373.7px;top:165.7px;font-size:24px;line-height:24px;color:#f0f0f0;letter-spacing:0.3px">Generale</div>
<div class="t" style="left:1591.4px;width:400px;text-align:center;top:223.2px;font-size:22px;line-height:22px;color:#f2f2f2;letter-spacing:0.2px">Formattazione</div>
<div class="t" style="left:1591.0px;width:400px;text-align:center;top:246.9px;font-size:22px;line-height:22px;color:#f2f2f2;letter-spacing:0.2px">condizionale</div>
<div class="t" style="left:1740.0px;width:400px;text-align:center;top:223.2px;font-size:22px;line-height:22px;color:#f2f2f2;letter-spacing:0.2px">Formatta</div>
<div class="t" style="left:1740.5px;width:400px;text-align:center;top:246.9px;font-size:22px;line-height:22px;color:#f2f2f2;letter-spacing:0.2px">come tabella</div>
<div class="t" style="left:1860.0px;width:400px;text-align:center;top:223.2px;font-size:22px;line-height:22px;color:#f2f2f2;letter-spacing:0.2px">Stili</div>
<div class="t" style="left:1860.0px;width:400px;text-align:center;top:246.9px;font-size:22px;line-height:22px;color:#f2f2f2;letter-spacing:0.2px">cella</div>
<div class="t" style="left:1998.6px;width:400px;text-align:center;top:223.1px;font-size:22px;line-height:22px;color:#f2f2f2;letter-spacing:0.2px">Inserisci</div>
<div class="t" style="left:2098.4px;width:400px;text-align:center;top:223.1px;font-size:22px;line-height:22px;color:#f2f2f2;letter-spacing:0.2px">Elimina</div>
<div class="t" style="left:2197.0px;width:400px;text-align:center;top:223.1px;font-size:22px;line-height:22px;color:#f2f2f2;letter-spacing:0.2px">Formato</div>
<div class="t nb" style="left:243.0px;top:226.9px;font-size:27px;line-height:27px;color:#dadada;font-weight:bold">G</div>
<div class="t nb" style="left:295.0px;top:226.9px;font-size:27px;line-height:27px;color:#d8d8d8;font-style:italic">C</div>
<div class="t nb" style="left:349.5px;top:227.8px;font-size:26px;line-height:26px;color:#d8d8d8;font-style:italic">S</div>
<div class="a" style="left:349px;top:252px;width:17px;height:2px;background:#cfcfcf"></div>
<div class="t" style="left:1446.5px;top:225.1px;font-size:36px;line-height:36px;color:#d0d0d0">%</div>
<div class="t nb" style="left:1596.5px;top:223.4px;font-size:19px;line-height:19px;color:#d8d8d8">,0</div>
<div class="t nb" style="left:1586.0px;top:239.8px;font-size:19px;line-height:19px;color:#d8d8d8">,00</div>
<div class="t nb" style="left:1639.0px;top:223.4px;font-size:19px;line-height:19px;color:#d8d8d8">,00</div>
<div class="t nb" style="left:1647.5px;top:239.8px;font-size:19px;line-height:19px;color:#d8d8d8">,0</div>
<div class="t nb" style="left:958px;top:160px;font-size:22px;line-height:22px;color:#d8d8d8;transform:rotate(-45deg);transform-origin:50% 50%">ab</div>
<div class="t nb" style="left:1101.0px;top:160.2px;font-size:21px;line-height:21px;color:#d8d8d8">ab</div>
<div class="t nb" style="left:1101.0px;top:174.2px;font-size:21px;line-height:21px;color:#d8d8d8">c</div>
<div class="t nb" style="left:2737.5px;top:97.4px;font-size:24px;line-height:24px;color:#ececec;font-weight:bold;letter-spacing:-0.1px">Condividi</div>
<!--/RIBBON-->
<div class="a" id="rline"></div>
<div class="a" id="fbar"></div>
<div class="a" style="left:0;top:286px;width:2880px;height:2px;background:#1f1f1f"></div>
<div class="a" style="left:2px;top:288px;width:166px;height:49px;background:#262626"></div>
<div class="a" style="left:168px;top:286px;width:4px;height:52px;background:#1e1e1e"></div>
<div class="a" style="left:360px;top:294px;width:2520px;height:38px;background:#383838;border-left:2px solid #2f2f2f"></div>
<div class="t" style="left:19.5px;top:299px;font-size:25px;line-height:25px;color:#e2e2e2">D7</div>
<svg class="a" style="left:0;top:286px" width="360" height="52" fill="#bdbdbd">
<path d="M146,21 L153,8.8 L160,21 Z"/><path d="M146,33 L153,45 L160,33 Z"/>
<path d="M203,19 L219,35 M219,19 L203,35" stroke="#555" stroke-width="4" fill="none"/>
<path d="M257.5,27 L264.5,34.5 L282.5,18.5" stroke="#555" stroke-width="4" fill="none"/>
</svg>
<svg class="a" style="left:300px;top:286px" width="60" height="52" fill="none" stroke="#999" stroke-linecap="round">
<path d="M15.8,38.5 Q17.5,41.5 20.5,39.5 Q23,37 24.5,28 L27,18.5 Q29,12.5 33,12.8 Q35.6,13 36,15.5" stroke-width="2.6"/>
<path d="M21.8,22.8 L32.8,22.8" stroke-width="2.2"/>
<path d="M31.5,24.5 Q33.5,23.5 35.2,26.5 L39.8,35 Q41.6,37.8 44.2,36.4 M44,24.6 Q41.6,24 39.8,27 L35.4,34.2 Q33.5,37.6 30.8,36.2" stroke-width="2.4"/>
</svg>
<div class="t" style="left:376px;top:301px;font-size:24.5px;line-height:24.5px;color:#fff;letter-spacing:-0.4px">Roma</div>

<div class="a" id="hline"></div>
<div class="a" id="colhdr"></div>
<div class="a" id="grid"></div>
<div class="a" id="rowhdr"></div>
<div class="a" id="hdrb"></div>
<div class="a" style="left:438px;top:610px;width:124px;height:158px;background:#c6c6c6;background-image:linear-gradient(to bottom,#a9a9a9 0,#a9a9a9 2px,transparent 2px);background-size:124px 32px"></div>
<div class="a" style="left:432px;top:576px;width:136px;height:198px;border:4px solid #1f7244"></div>
<div class="a" style="left:557px;top:763px;width:15px;height:15px;background:#fff"></div>
<div class="a" style="left:560px;top:766px;width:10px;height:10px;background:#1f7244"></div>
<div class="t" style="left:440px;top:586.2px;font-size:21px;line-height:21px;color:#000">Roma</div>
<div class="t" style="left:440px;top:618.2px;font-size:21px;line-height:21px;color:#000;letter-spacing:1px">Milano</div>
<div class="t" style="left:440px;top:650.2px;font-size:21px;line-height:21px;color:#000;letter-spacing:0.6px">Napoli</div>
<div class="t" style="left:440px;top:682.2px;font-size:21px;line-height:21px;color:#000">Catania</div>
<div class="t" style="left:440px;top:714.2px;font-size:21px;line-height:21px;color:#000;letter-spacing:0.7px">Bergamo</div>
<div class="t" style="left:440px;top:746.2px;font-size:21px;line-height:21px;color:#000">Messina</div>
<svg class="a" style="left:0;top:344px" width="46" height="42"><path d="M10,38 L40.5,8 L40.5,38 Z" fill="#217346"/></svg>

<div class="a" id="rowhdrb"></div>
<div class="a" style="left:434px;top:344px;width:132px;height:40px;background:#575757"></div>
<div class="a" style="left:434px;top:384px;width:132px;height:4px;background:#1f7244"></div>
<div class="a" style="left:0;top:578px;width:42px;height:194px;background:#575757"></div>
<div class="a" style="left:42px;top:578px;width:4px;height:194px;background:#1f7244"></div>
<div class="ch" style="left:46px">A</div>
<div class="ch" style="left:176px">B</div>
<div class="ch" style="left:306px">C</div>
<div class="ch sel" style="left:436px">D</div>
<div class="ch" style="left:566px">E</div>
<div class="ch" style="left:696px">F</div>
<div class="ch" style="left:826px">G</div>
<div class="ch" style="left:956px">H</div>
<div class="ch" style="left:1086px">I</div>
<div class="ch" style="left:1216px">J</div>
<div class="ch" style="left:1346px">K</div>
<div class="ch" style="left:1476px">L</div>
<div class="ch" style="left:1606px">M</div>
<div class="ch" style="left:1736px">N</div>
<div class="ch" style="left:1866px">O</div>
<div class="ch" style="left:1996px">P</div>
<div class="ch" style="left:2126px">Q</div>
<div class="ch" style="left:2256px">R</div>
<div class="ch" style="left:2386px">S</div><div class="rh" style="top:388px">1</div>
<div class="rh" style="top:420px">2</div>
<div class="rh" style="top:452px">3</div>
<div class="rh" style="top:484px">4</div>
<div class="rh" style="top:516px">5</div>
<div class="rh" style="top:548px">6</div>
<div class="rh sel" style="top:580px">7</div>
<div class="rh sel" style="top:612px">8</div>
<div class="rh sel" style="top:644px">9</div>
<div class="rh sel" style="top:676px">10</div>
<div class="rh sel" style="top:708px">11</div>
<div class="rh sel" style="top:740px">12</div>
<div class="rh" style="top:772px">13</div>
<div class="rh" style="top:804px">14</div>
<div class="rh" style="top:836px">15</div>
<div class="rh" style="top:868px">16</div>
<div class="rh" style="top:900px">17</div>
<div class="rh" style="top:932px">18</div>
<div class="rh" style="top:964px">19</div>
<div class="rh" style="top:996px">20</div>
<div class="rh" style="top:1028px">21</div>
<div class="rh" style="top:1060px">22</div>
<div class="rh" style="top:1092px">23</div>
<div class="rh" style="top:1124px">24</div>
<div class="rh" style="top:1156px">25</div>
<div class="rh" style="top:1188px">26</div>
<div class="rh" style="top:1220px">27</div>
<div class="rh" style="top:1252px">28</div>
<div class="rh" style="top:1284px">29</div>
<div class="rh" style="top:1316px">30</div>
<div class="rh" style="top:1348px">31</div>
<div class="rh" style="top:1380px">32</div>
<div class="rh" style="top:1412px">33</div>
<div class="rh" style="top:1444px">34</div>
<div class="rh" style="top:1476px">35</div>
<div class="rh" style="top:1508px">36</div>
<div class="rh" style="top:1540px">37</div>
<div class="rh" style="top:1572px">38</div>
<div class="rh" style="top:1604px">39</div>
<div class="rh" style="top:1636px">40</div>
<div class="rh" style="top:1668px">41</div>
<div class="rh" style="top:1700px">42</div>
<div class="a" id="tabbar"></div>
<!--MENU-->
<div class="a" style="left:2363px;top:217px;width:517px;height:330px;border-radius:7px;background:#333333;border:1px solid #0e0e0e;box-shadow:0 10px 34px rgba(0,0,0,0.2)"></div>
<div class="a" style="left:2364px;top:226px;width:516px;height:48px;background:#148a43"></div>
<div class="a" style="left:2364px;top:382px;width:516px;height:4px;background:#464646"></div>
<div class="t" style="left:2452px;top:235.5px;font-size:27px;line-height:27px;color:#fff;letter-spacing:0.65px">Ordina dalla A alla Z</div>
<div class="t" style="left:2452px;top:283.5px;font-size:27px;line-height:27px;color:#e6e6e6;letter-spacing:0.65px">Ordina dalla Z alla A</div>
<div class="t" style="left:2452px;top:331.5px;font-size:27px;line-height:27px;color:#e6e6e6;letter-spacing:0.97px">Ordinamento personalizzato...</div>
<div class="t" style="left:2452px;top:403.5px;font-size:27px;line-height:27px;color:#e6e6e6;letter-spacing:0.6px">Filtro</div>
<div class="t" style="left:2452px;top:451.5px;font-size:27px;line-height:27px;color:#6b6b6b;letter-spacing:0.6px">Cancella</div>
<div class="t" style="left:2452px;top:499.5px;font-size:27px;line-height:27px;color:#6b6b6b;letter-spacing:0.6px">Riapplica</div>
<svg class="a" style="left:2400px;top:220px" width="50" height="320" fill="none" stroke-width="1.8">
<!-- A Z down -->
<path d="M8.5,25.5 L15,10.5 L21.5,25.5 M11,20 L19,20" stroke="#3d9be0"/>
<path d="M8.5,31 L21,31 L8.5,45.5 L21.5,45.5" stroke="#e8e8e8"/>
<path d="M33.5,10.5 L33.5,45 M27.5,38.5 L33.5,45 L39.5,38.5" stroke="#e8e8e8"/>
<!-- Z A down -->
<path d="M8.5,59.5 L21,59.5 L8.5,73.5 L21.5,73.5" stroke="#e8e8e8"/>
<path d="M8.5,93.5 L15,78.5 L21.5,93.5 M11,88 L19,88" stroke="#3d9be0"/>
<path d="M33.5,59 L33.5,93.5 M27.5,87 L33.5,93.5 L39.5,87" stroke="#e8e8e8"/>
<!-- custom sort -->
<rect x="7" y="107" width="34" height="34.5" stroke="#e0e0e0" stroke-width="1.8"/>
<rect x="8" y="108" width="32" height="4" fill="#6a6a6a" stroke="none"/>
<path d="M7,113 L41,113" stroke="#e0e0e0" stroke-width="1.6"/>
<path d="M16.5,116 L16.5,136 M11,130.5 L16.5,136 L22,130.5" stroke="#3d9be0" stroke-width="2"/>
<path d="M31.5,136.5 L31.5,116.5 M26,122 L31.5,116.5 L37,122" stroke="#e0e0e0" stroke-width="1.8"/>
<!-- Filtro -->
<path d="M7,179 L40,179 L40,185.5 L28,197.5 L28,213 L19,213 L19,197.5 L7,185.5 Z" stroke="#e4e4e4" stroke-width="1.9"/>
<!-- Cancella -->
<path d="M26,242.5 L40,228.5 L40,227 L7,227 L7,233.5 L19,245.5 L19,261 L22,261" stroke="#6e6e6e" stroke-width="1.9"/>
<path d="M25,244.5 L43.5,263.5 M43.5,244.5 L25,263.5" stroke="#7a3636" stroke-width="1.9"/>
<!-- Riapplica -->
<path d="M29.5,291.5 L40,281 L40,275 L7,275 L7,281.5 L19,293.5 L19,310" stroke="#6e6e6e" stroke-width="1.9"/>
<path d="M23.5,300 A9.5,9.5 0 0 1 41.5,296.5 M42.5,290 L42.5,298 L35,298" stroke="#4a8a5a" stroke-width="2"/>
<path d="M42.5,305 A9.5,9.5 0 0 1 24.5,308.5 M23.5,315 L23.5,307 L31,307" stroke="#4a8a5a" stroke-width="2"/>
</svg>

<!--/MENU-->
<div class="a" id="sline"></div>
<div class="a" id="status"></div>
<!--BOTTOM-->
<div class="a" style="left:0;top:1702px;width:2880px;height:2px;background:#595959"></div>
<svg class="a" style="left:0;top:1702px" width="400" height="55">
<path d="M43.8,18 L30,27.8 L43.8,37.6 Z" fill="#6a6a6a" stroke="#6a6a6a" stroke-width="1.5" stroke-linejoin="round"/>
<path d="M76.2,18 L90,27.8 L76.2,37.6 Z" fill="#6a6a6a" stroke="#6a6a6a" stroke-width="1.5" stroke-linejoin="round"/>
<path d="M121.5,0 L121.5,39 Q121.5,45 127.5,45 L272.5,45 Q278.5,45 278.5,39 L278.5,0 Z" fill="#fff" stroke="#5c5c5c" stroke-width="1.5"/>
<path d="M308,26.2 L328,26.2 M318,16 L318,36.4" stroke="#bdbdbd" stroke-width="3.6"/>
<rect x="353.5" y="2" width="2" height="41" fill="#555"/>
</svg>
<div class="t nb" style="left:157.5px;top:1717px;font-size:22.5px;line-height:22.5px;color:#1e8049;font-weight:bold;letter-spacing:0.2px">Foglio1</div>
<div class="a" style="left:2242px;top:1754px;width:74px;height:46px;background:#5a5a5a"></div>
<div class="t" style="left:48px;top:1766.5px;font-size:23px;line-height:23px;color:#e8e8e8;letter-spacing:1.3px">Pronto</div>
<div class="t" style="left:199.5px;top:1766.5px;font-size:23px;line-height:23px;color:#e8e8e8;letter-spacing:1.15px">Accessibilità: conforme</div>
<div class="t" style="left:2075px;top:1766.5px;font-size:23px;line-height:23px;color:#e8e8e8;letter-spacing:1.55px">Conteggio: 6</div>
<div class="t" style="left:2768.5px;top:1766.5px;font-size:23px;line-height:23px;color:#e8e8e8;letter-spacing:1.4px">100%</div>
<svg class="a" style="left:0;top:1754px" width="2880" height="46" fill="none" stroke="#fff" stroke-width="2.2">
<circle cx="174.9" cy="12.8" r="3.6"/>
<path d="M174.9,17.3 C171,17.3 167.5,15 164.8,14.8 C162.6,14.8 162.3,17.6 164.5,18.6 C166.5,19.6 170.5,20 170.5,22.5 L170.5,27 C170.5,30 167.8,32.5 167.8,34.5 C167.8,36.6 170.2,37 171.8,35.6" stroke-linecap="round" stroke-linejoin="round"/>
<path d="M174.9,17.3 C178.8,17.3 182.3,15 185,14.8 C187.2,14.8 187.5,17.6 185.3,18.6 C183.3,19.6 180,20 180,22.5 L180,26.5" stroke-linecap="butt" stroke-linejoin="round"/>
<path d="M175.9,30.3 L182.4,36.6 L193,26"/>
<rect x="2267" y="10.5" width="24.2" height="25" rx="2"/>
<path d="M2275.2,10.5 L2275.2,35.5 M2283.2,10.5 L2283.2,35.5 M2267,19.2 L2291.2,19.2 M2267,27.2 L2291.2,27.2"/>
<rect x="2338.1" y="10.5" width="25.7" height="25" rx="2"/>
<rect x="2344" y="14.9" width="13.9" height="16.2"/>
<path d="M2347,19.8 L2355,19.8 M2347,23 L2355,23 M2347,26.9 L2355,26.9"/>
<rect x="2409" y="10.5" width="25.9" height="25" rx="2"/>
<path d="M2409,26 L2425.5,26 L2425.5,10.5 M2416.8,10.5 L2416.8,26"/>
<path d="M2474,23 L2490,23" stroke-width="4"/>
<path d="M2717.5,23 L2734,23 M2725.7,14.5 L2725.7,31.5" stroke-width="3.8"/>
</svg>
<div class="a" style="left:2504px;top:1773px;width:200px;height:9px;border-radius:5px;background:#6b6b6b"></div>
<div class="a" style="left:2587.7px;top:1761px;width:32px;height:32px;border-radius:50%;background:#9b9b9b"></div>

<!--/BOTTOM-->
</body></html>
